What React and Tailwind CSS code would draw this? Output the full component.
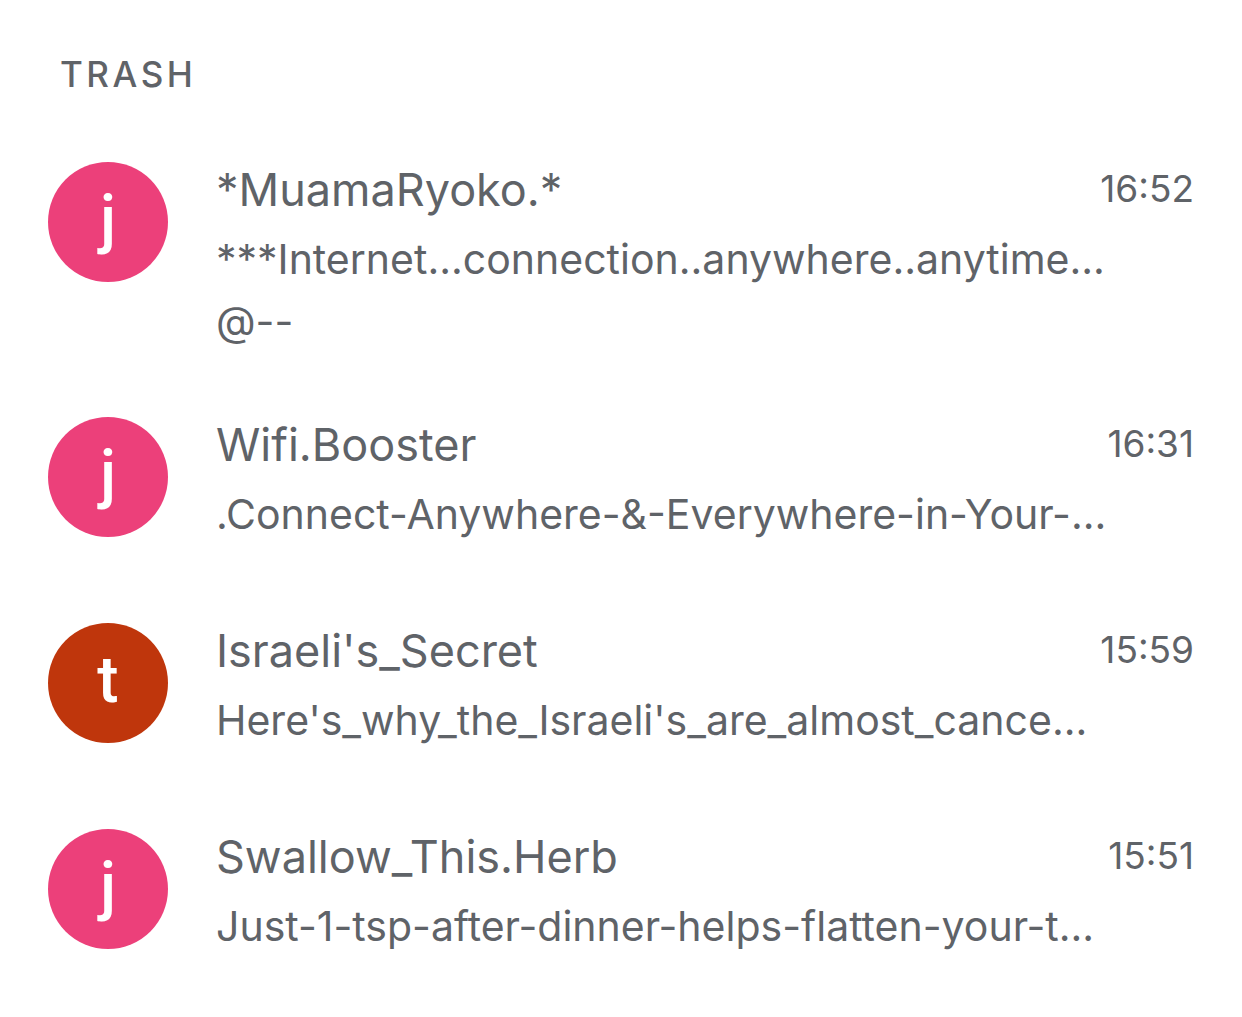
import React from 'react';

const messages = [
    { id: 1, initial: 'j', color: 'bg-[#ec407a]', sender: '*MuamaRyoko.*', time: '16:52', subject: '***Internet...connection..anywhere..anytime...', rest: '@--' },
    { id: 2, initial: 'j', color: 'bg-[#ec407a]', sender: 'Wifi.Booster', time: '16:31', subject: '.Connect-Anywhere-&-Everywhere-in-Your-...' },
    { id: 3, initial: 't', color: 'bg-[#bf360c]', sender: "Israeli's_Secret", time: '15:59', subject: "Here's_why_the_Israeli's_are_almost_cance..." },
    { id: 4, initial: 'j', color: 'bg-[#ec407a]', sender: 'Swallow_This.Herb', time: '15:51', subject: 'Just-1-tsp-after-dinner-helps-flatten-your-t...' }
];

const Avatar = ({ initial, color }) => (
    <div className={`flex h-30 w-30 shrink-0 items-center justify-center rounded-full pb-1 font-['Roboto',sans-serif] text-[64px] leading-none font-medium text-white ${color}`}>
        {initial}
    </div>
);

const Message = ({ message }) => (
    <li className="flex min-h-[141px] gap-12">
        <Avatar initial={message.initial} color={message.color} />
        <div className="min-w-0 flex-1">
            <div className="flex items-start justify-between">
                <h2 className="text-[45px] leading-[56px]">{message.sender}</h2>
                <time className="text-[37px] leading-[54px]">{message.time}</time>
            </div>
            <p className="mt-2.5 text-[41px] leading-[62px] whitespace-nowrap">{message.subject}</p>
            {message.rest && <p className="text-[41px] leading-[62px]">{message.rest}</p>}
        </div>
    </li>
);

const App = () => (
    <main className="min-h-screen bg-white p-12 font-['Inter',sans-serif] text-[#5f6368]">
        <h1 className="ml-3 text-[35px] leading-[52px] font-medium tracking-widest">TRASH</h1>
        <ul className="mt-[62px] flex flex-col gap-[65px]">
            {messages.map((message) => (
                <Message key={message.id} message={message} />
            ))}
        </ul>
    </main>
);

export default App;
